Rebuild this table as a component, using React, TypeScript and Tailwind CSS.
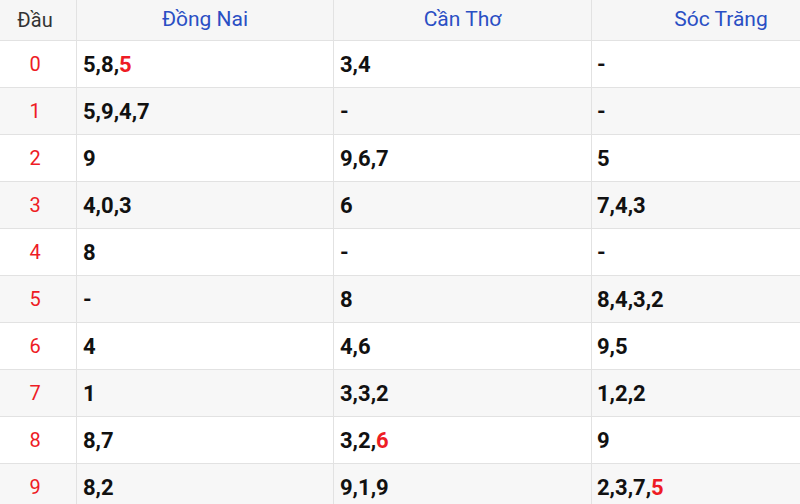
import React from "react";

const rows: string[][] = [
  ["5,8,*5", "3,4", "-"],
  ["5,9,4,7", "-", "-"],
  ["9", "9,6,7", "5"],
  ["4,0,3", "6", "7,4,3"],
  ["8", "-", "-"],
  ["-", "8", "8,4,3,2"],
  ["4", "4,6", "9,5"],
  ["1", "3,3,2", "1,2,2"],
  ["8,7", "3,2,*6", "9"],
  ["8,2", "9,1,9", "2,3,7,*5"],
];

function renderVal(v: string) {
  const idx = v.indexOf("*");
  if (idx < 0) return <>{v}</>;
  return (
    <>
      {v.slice(0, idx)}
      <span className="text-[#ee1c25]">{v.slice(idx + 1)}</span>
    </>
  );
}

export default function App() {
  return (
    <div
      className="w-[800px] h-[504px] overflow-hidden bg-white"
      style={{ fontFamily: "Roboto, 'Liberation Sans', sans-serif" }}
    >
      <div className="w-[850px]">
        <div className="grid grid-cols-[77px_257px_258px_258px] h-[41px] bg-[#f6f6f6] border-b border-[#e2e2e2] text-[21px]">
          <div className="flex items-center justify-center pr-[6px] text-[20px] text-[#333333] border-r border-[#e2e2e2]">Đầu</div>
          <div className="flex items-center justify-center text-[#2a4fc4] border-r border-[#e2e2e2]">Đồng Nai</div>
          <div className="flex items-center justify-center text-[#2a4fc4] border-r border-[#e2e2e2]">Cần Thơ</div>
          <div className="flex items-center justify-center text-[#2a4fc4]">Sóc Trăng</div>
        </div>
        {rows.map((r, i) => (
          <div
            key={i}
            className={`grid grid-cols-[77px_257px_258px_258px] h-[47px] border-b border-[#e2e2e2] text-[22px] ${
              i % 2 === 1 ? "bg-[#f7f7f7]" : "bg-white"
            }`}
          >
            <div className="flex items-center justify-center pr-[6px] text-[20px] text-[#ee1c25] border-r border-[#e2e2e2]">{i}</div>
            <div className="flex items-center pl-[6px] font-bold text-[#111111] border-r border-[#e2e2e2]">{renderVal(r[0])}</div>
            <div className="flex items-center pl-[6px] font-bold text-[#111111] border-r border-[#e2e2e2]">{renderVal(r[1])}</div>
            <div className="flex items-center pl-[5px] font-bold text-[#111111]">{renderVal(r[2])}</div>
          </div>
        ))}
      </div>
    </div>
  );
}
